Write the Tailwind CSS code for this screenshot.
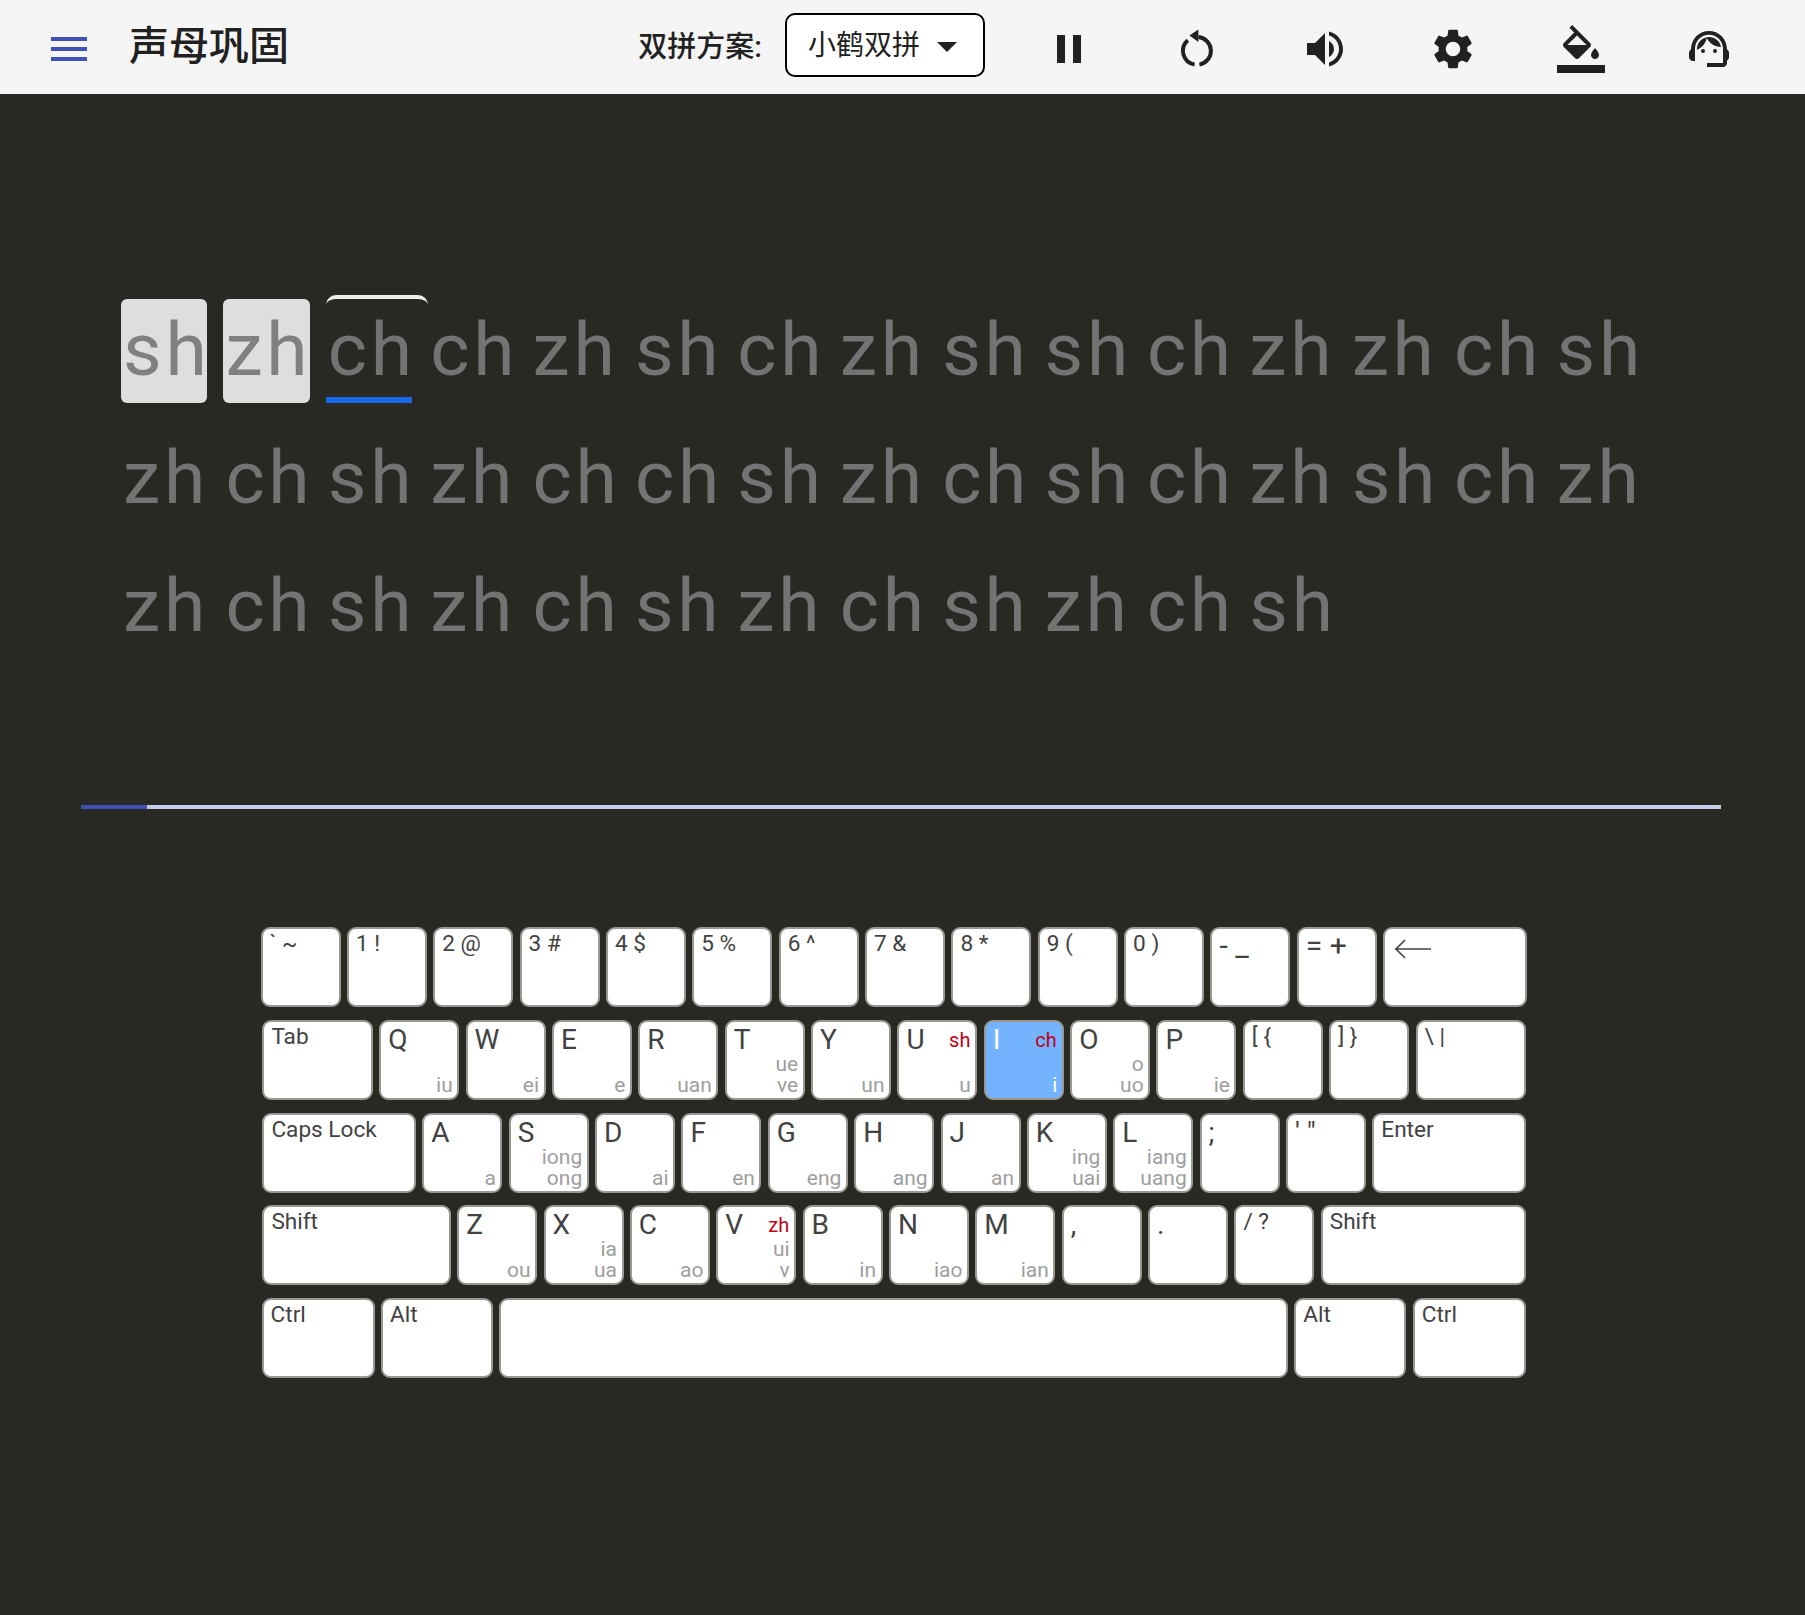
<!DOCTYPE html>
<html lang="zh">
<head>
    <meta charset="UTF-8">
    <title>声母巩固</title>
    <script src="https://cdn.jsdelivr.net/npm/@tailwindcss/browser@4"></script>
</head>
<body class="min-h-screen overflow-hidden bg-[#282923] font-['Roboto','Noto_Sans_CJK_SC',sans-serif]">

<header class="flex h-[94px] items-center bg-[#f5f5f5] text-[#212121]">
    <svg class="ml-[45px] mt-[4px] h-[48px] w-[48px] fill-[#3f51b5]" viewBox="0 0 24 24"><path d="M3 18h18v-2H3v2zm0-5h18v-2H3v2zm0-7v2h18V6H3z"/></svg>
    <h1 class="ml-[36px] text-[40px] font-medium leading-none">声母巩固</h1>

    <span class="ml-auto text-[29px] font-medium leading-none">双拼方案:</span>
    <div class="mb-[5px] ml-[23px] flex h-[64px] w-[200px] items-center rounded-[10px] border-[2.5px] border-black bg-white pl-[21px] pt-[3px] text-[28px]">
        小鹤双拼
        <svg class="ml-[3px] h-[48px] w-[48px] fill-[#212121]" viewBox="0 0 24 24"><path d="M7 10l5 5 5-5z"/></svg>
    </div>

    <div class="ml-[60px] mr-[72px] mt-[4px] flex gap-[80px]">
        <svg class="h-[48px] w-[48px] fill-[#212121]" viewBox="0 0 24 24"><path d="M6 19h4V5H6v14zm8-14v14h4V5h-4z"/></svg>
        <svg class="h-[48px] w-[48px] fill-[#212121]" viewBox="0 0 24 24">
            <path d="M12.7 5.95A7 7 0 0 1 13.2 19.8M10.8 19.8A7 7 0 0 1 7.4 7.6" fill="none" stroke="#212121" stroke-width="2"/>
            <path d="M8.2 5.3l4.5-3.1v6.3z"/>
        </svg>
        <svg class="h-[48px] w-[48px] fill-[#212121]" viewBox="0 0 24 24"><path d="M3 9v6h4l5 5V4L7 9H3zm13.5 3c0-1.77-1.02-3.29-2.5-4.03v8.05c1.48-.73 2.5-2.25 2.5-4.02zM14 3.23v2.06c2.89.86 5 3.54 5 6.71s-2.11 5.85-5 6.71v2.06c4.01-.91 7-4.49 7-8.77s-2.99-7.86-7-8.77z"/></svg>
        <svg class="h-[48px] w-[48px] fill-[#212121]" viewBox="0 0 24 24"><path d="M19.14 12.94c.04-.3.06-.61.06-.94 0-.32-.02-.64-.07-.94l2.03-1.58c.18-.14.23-.41.12-.61l-1.92-3.32c-.12-.22-.37-.29-.59-.22l-2.39.96c-.5-.38-1.03-.7-1.62-.94l-.36-2.54c-.04-.24-.24-.41-.48-.41h-3.84c-.24 0-.43.17-.47.41l-.36 2.54c-.59.24-1.13.57-1.62.94l-2.39-.96c-.22-.08-.47 0-.59.22L2.74 8.87c-.12.21-.08.47.12.61l2.03 1.58c-.05.3-.09.63-.09.94s.02.64.07.94l-2.03 1.58c-.18.14-.23.41-.12.61l1.92 3.32c.12.22.37.29.59.22l2.39-.96c.5.38 1.03.7 1.62.94l.36 2.54c.05.24.24.41.48.41h3.84c.24 0 .44-.17.47-.41l.36-2.54c.59-.24 1.13-.56 1.62-.94l2.39.96c.22.08.47 0 .59-.22l1.92-3.32c.12-.22.07-.47-.12-.61l-2.01-1.58zM12 15.6c-1.98 0-3.6-1.62-3.6-3.6s1.62-3.6 3.6-3.6 3.6 1.62 3.6 3.6-1.62 3.6-3.6 3.6z"/></svg>
        <svg class="h-[48px] w-[48px] fill-[#212121]" viewBox="0 0 24 24"><path d="M16.56 8.94L7.62 0 6.21 1.41l2.38 2.38-5.15 5.15c-.59.59-.59 1.54 0 2.12l5.5 5.5c.29.29.68.44 1.06.44s.77-.15 1.06-.44l5.5-5.5c.59-.58.59-1.53 0-2.12zM5.21 10L10 5.21 14.79 10H5.21zM19 11.5s-2 2.17-2 3.5c0 1.1.9 2 2 2s2-.9 2-2c0-1.33-2-3.5-2-3.5z"/><path d="M0 20h24v4H0z"/></svg>
        <svg class="h-[48px] w-[48px] fill-[#212121]" viewBox="0 0 24 24"><path d="M21 12.22C21 6.73 16.74 3 12 3c-4.69 0-9 3.65-9 9.28-.6.34-1 .98-1 1.72v2c0 1.1.9 2 2 2h1v-6.1c0-3.87 3.13-7 7-7s7 3.13 7 7V19h-8v2h8c1.1 0 2-.9 2-2v-1.22c.59-.31 1-.92 1-1.64v-2.3c0-.7-.41-1.31-1-1.62z"/><circle cx="9" cy="13" r="1"/><circle cx="15" cy="13" r="1"/><path d="M18 11.03C17.52 8.18 15.04 6 12.05 6c-3.03 0-6.29 2.51-6.03 6.45 2.47-1.01 4.33-3.21 4.86-5.89 1.31 2.63 4 4.44 7.12 4.47z"/></svg>
    </div>
</header>

<!-- practice words -->
<div id="words" class="ml-[121px] mt-[205px] flex h-[360px] flex-col gap-[24px]"></div>

<div class="ml-[81px] mt-[146px] h-[4px] w-[1640px] bg-[#c5cae9]">
    <div class="h-full w-[66px] bg-[#3f51b5]"></div>
</div>

<!-- keyboard -->
<div id="keyboard" class="ml-[260px] mt-[118px] flex w-[1270px] flex-col gap-[12.8px]"></div>

<script>
    const lines = [
        'sh zh ch ch zh sh ch zh sh sh ch zh zh ch sh',
        'zh ch sh zh ch ch sh zh ch sh ch zh sh ch zh',
        'zh ch sh zh ch sh zh ch sh zh ch sh'
    ];

    const wordsEl = document.getElementById('words');
    let index = 0;
    lines.forEach(line => {
        const lineEl = document.createElement('div');
        lineEl.className = 'flex gap-x-[16px]';
        line.split(' ').forEach(word => {
            const el = document.createElement('span');
            el.textContent = word;
            el.className = 'relative block h-[104px] w-[86.4px] whitespace-nowrap rounded-[6px] pl-[2px] text-[75px] leading-[100px] tracking-[3.7px] text-[#737373]';
            if (index < 2) {
                el.className += ' bg-[#dedede] !text-[#808080]';
            }
            if (index === 2) {
                const caret = document.createElement('i');
                caret.className = 'absolute left-0 top-[-4px] h-[24px] w-[102px] rounded-[10px] border-t-[4px] border-[#eeeeee]';
                const bar = document.createElement('i');
                bar.className = 'absolute bottom-0 left-0 h-[6px] w-[86px] bg-[#1769e8]';
                el.append(caret, bar);
            }
            lineEl.appendChild(el);
            index++;
        });
        wordsEl.appendChild(lineEl);
    });

    // [label, width, finals, red initial, text size]
    const rows = [
        { ml: 'ml-[0.5px]', keys: [['` ~'],['1 !'],['2 @'],['3 #'],['4 $'],['5 %'],['6 ^'],['7 &'],['8 *'],['9 ('],['0 )'],['- _',80,[],'','big'],['= +',80,[],'','big'],['←',143.5]] },
        { ml: 'ml-[2.4px]', keys: [['Tab',110.5],['Q',80,['iu']],['W',80,['ei']],['E',80,['e']],['R',80,['uan']],['T',80,['ue','ve']],['Y',80,['un']],['U',80,['u'],'sh'],['I',80,['i'],'ch'],['O',80,['o','uo']],['P',80,['ie']],['[ {'],['] }'],['\\ |',110.2]] },
        { ml: 'ml-[2.4px]', keys: [['Caps Lock',153.6],['A',80,['a']],['S',80,['iong','ong']],['D',80,['ai']],['F',80,['en']],['G',80,['eng']],['H',80,['ang']],['J',80,['an']],['K',80,['ing','uai']],['L',80,['iang','uang']],[';',80,[],'','mid'],['\' "',80,[],'','mid'],['Enter',153.4]] },
        { ml: 'ml-[2.4px]', keys: [['Shift',188.4],['Z',80,['ou']],['X',80,['ia','ua']],['C',80,['ao']],['V',80,['ui','v'],'zh'],['B',80,['in']],['N',80,['iao']],['M',80,['ian']],[',',80,[],'','mid'],['.',80,[],'','mid'],['/ ?'],['Shift',205]] },
        { ml: 'ml-[1.6px]', keys: [['Ctrl',113],['Alt',111.7],['',789],['Alt',112],['Ctrl',113]] }
    ];

    const keyboardEl = document.getElementById('keyboard');
    rows.forEach(row => {
        const rowEl = document.createElement('div');
        rowEl.className = 'flex gap-[6.37px] ' + row.ml;
        row.keys.forEach(([label, width = 80, finals = [], red = '', size = '']) => {
            const key = document.createElement('div');
            const active = label === 'I';
            key.style.width = width + 'px';
            key.className = 'relative h-[80px] shrink-0 rounded-[9px] border-2 border-[#9b9793] pl-[7px] ' + (active ? 'bg-[#74b3ff] text-white' : 'bg-white text-[#424242]');

            const main = document.createElement('div');
            if (size === 'big') {
                main.className = 'text-[30px] leading-[34px] whitespace-pre';
            } else if (/^[A-Z]$/.test(label) || size === 'mid') {
                main.className = 'text-[28px] leading-[36px] whitespace-pre';
            } else {
                main.className = 'text-[22.6px] leading-[30px] whitespace-pre';
            }
            if (label === '←') {
                main.innerHTML = '<svg class="ml-[1px] mt-[9px] h-[24px] w-[40px]" viewBox="0 0 40 24" fill="none" stroke="#424242" stroke-width="1.6"><path d="M2 11h36M12 2l-9 9 9 9"/></svg>';
            } else {
                main.textContent = label;
            }
            key.appendChild(main);

            if (red) {
                const r = document.createElement('div');
                r.textContent = red;
                r.className = 'absolute right-[5px] top-[3px] text-[20px] leading-[30px] text-[#c20014]';
                key.appendChild(r);
            }
            if (finals.length) {
                const f = document.createElement('div');
                f.className = 'absolute bottom-[2px] right-[4.5px] flex flex-col items-end text-[21px] leading-[21px] ' + (active ? 'text-white' : 'text-[#9e9e9e]');
                finals.forEach(t => {
                    const line = document.createElement('span');
                    line.textContent = t;
                    f.appendChild(line);
                });
                key.appendChild(f);
            }
            rowEl.appendChild(key);
        });
        keyboardEl.appendChild(rowEl);
    });
</script>
</body>
</html>
